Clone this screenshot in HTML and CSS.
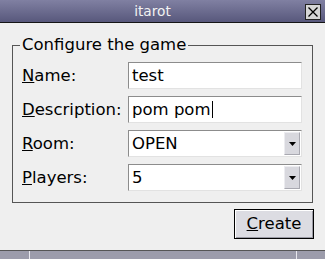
FILE: index.html
```html
<!DOCTYPE html>
<html>
<head>
<meta charset="utf-8">
<link rel="stylesheet" href="styles.css">
</head>
<body>
<div class="window">
  <div class="titlebar">
    <div class="title">itarot</div>
    <div class="close">
      <svg width="16" height="16" viewBox="0 0 16 16">
        <rect x="0.5" y="0.5" width="15" height="15" fill="#d6d6d6" stroke="#222"/>
        <path d="M3.5 3.5 L12.5 12.5 M12.5 3.5 L3.5 12.5" stroke="#000" stroke-width="1.3"/>
      </svg>
    </div>
  </div>
  <div class="content">
    <fieldset class="group">
      <legend class="legend">Configure the game</legend>
      <div class="form">
        <label class="label"><u>N</u>ame:</label>
        <div class="field">test</div>
        <label class="label"><u>D</u>escription:</label>
        <div class="field">pom pom<span class="caret"></span></div>
        <label class="label"><u>R</u>oom:</label>
        <div class="field combo"><span class="value">OPEN</span><span class="drop"><svg width="7" height="4" viewBox="0 0 7 4"><path d="M0 0 H7 L3.5 4 Z" fill="#000"/></svg></span></div>
        <label class="label"><u>P</u>layers:</label>
        <div class="field combo"><span class="value">5</span><span class="drop"><svg width="7" height="4" viewBox="0 0 7 4"><path d="M0 0 H7 L3.5 4 Z" fill="#000"/></svg></span></div>
      </div>
    </fieldset>
    <div class="actions">
      <button class="btn"><u>C</u>reate</button>
    </div>
  </div>
  <div class="taskbar">
    <span class="seg seg-a"></span>
    <span class="seg seg-b"></span>
    <span class="seg seg-c"></span>
  </div>
</div>
</body>
</html>
```
FILE: styles.css
```css
html, body {
  margin: 0;
  padding: 0;
}
body {
  width: 325px;
  height: 259px;
  overflow: hidden;
  font-family: "DejaVu Sans", "Liberation Sans", sans-serif;
  background: #efefef;
}
.window {
  width: 325px;
  height: 259px;
  display: flex;
  flex-direction: column;
  background: #efefef;
}
.titlebar {
  height: 22px;
  border-bottom: 1px solid #151515;
  background: linear-gradient(#8080a2, #58587c);
  display: flex;
  align-items: center;
}
.title {
  flex: 1;
  text-align: center;
  color: #f2f2f2;
  font-size: 13.7px;
  line-height: 22px;
}
.close {
  width: 16px;
  height: 16px;
  margin-right: 4px;
  margin-top: 1px;
}
.close svg {
  display: block;
}
.content {
  flex: 1;
  padding-top: 12px;
  display: flex;
  flex-direction: column;
}
.group {
  margin: 0 12px;
  padding: 7px 10px 11px 9px;
  border: 1px solid #555;
  min-width: 0;
}
.legend {
  font-size: 16.5px;
  line-height: 20px;
  padding: 0 2px;
  margin-left: -2px;
  color: #000;
}
.form {
  display: grid;
  grid-template-columns: 106px 174px;
  grid-auto-rows: 27px;
  row-gap: 7px;
  align-items: center;
}
.label {
  font-size: 16.5px;
  line-height: 20px;
  color: #000;
}
.field {
  box-sizing: border-box;
  height: 27px;
  border: 1px solid;
  border-color: #8c8c8c #e2e2e2 #e2e2e2 #8c8c8c;
  background: #fff;
  padding: 0 3px;
  display: flex;
  align-items: center;
  font-size: 16.5px;
  line-height: 20px;
  color: #000;
}
.caret {
  display: inline-block;
  width: 1px;
  height: 17px;
  background: #000;
  margin-left: 1px;
}
.combo {
  padding: 1px;
  align-items: stretch;
}
.combo .value {
  padding-left: 2px;
  display: flex;
  align-items: center;
}
.drop {
  margin-left: auto;
  box-sizing: border-box;
  width: 16px;
  background: #d8d8de;
  border: 1px solid;
  border-color: #ececf0 #a8a8b0 #a8a8b0 #ececf0;
  display: flex;
  align-items: center;
  justify-content: center;
}
.drop svg {
  display: block;
}
.actions {
  display: flex;
  justify-content: flex-end;
  padding-right: 11px;
  margin-top: 6px;
}
.btn {
  box-sizing: border-box;
  width: 80px;
  height: 30px;
  border: 1px solid #000;
  background: #dcdce2;
  box-shadow: inset 1px 1px #ffffff, inset -1px -1px #9a9aa4;
  font-family: "DejaVu Sans", "Liberation Sans", sans-serif;
  font-size: 16.5px;
  line-height: 20px;
  color: #000;
  padding: 0;
  margin: 0;
}
.taskbar {
  height: 8px;
  border-top: 1px solid #555;
  background: #9c9cab;
  display: flex;
}
.seg-a {
  width: 29px;
}
.seg-b {
  width: 266px;
  border-left: 1px solid #e8e8ee;
}
.seg-c {
  flex: 1;
  border-left: 1px solid #e8e8ee;
}
```
